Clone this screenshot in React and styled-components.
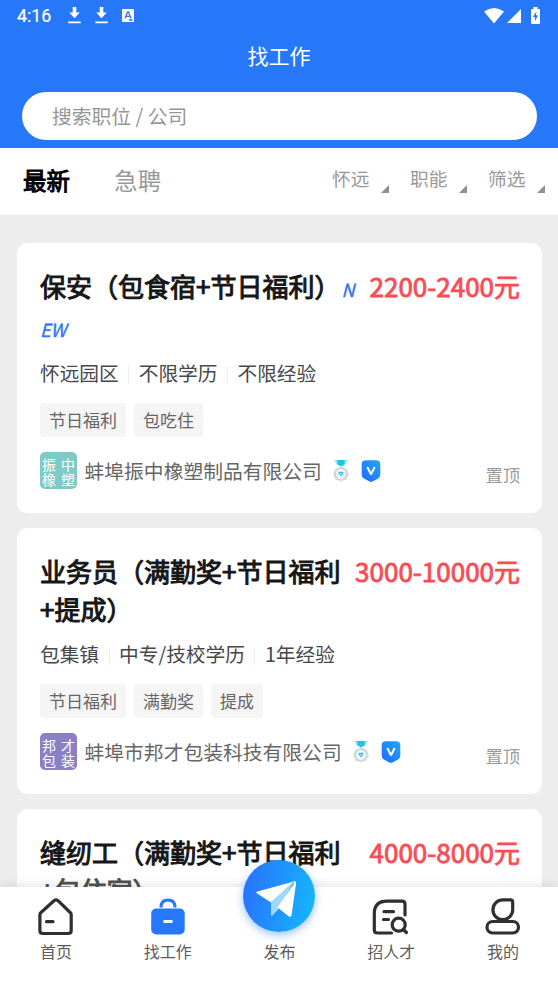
import React from "react";
import styled, { createGlobalStyle } from "styled-components";

const Global = createGlobalStyle`
  *, *::before, *::after { box-sizing: border-box; }
  html, body { margin: 0; padding: 0; }
  body {
    width: 558px;
    height: 993px;
    overflow: hidden;
    background: #ededed;
    font-family: "Noto Sans CJK SC", "Noto Sans", sans-serif;
  }
`;

const Screen = styled.div`
  width: 558px;
  height: 993px;
  display: flex;
  flex-direction: column;
  overflow: hidden;
  background: #ededed;
`;

const Header = styled.header`
  flex: none;
  height: 148px;
  background: #2678f8;
  color: #fff;
`;

const StatusBar = styled.div`
  height: 31px;
  padding: 0 18px 0 17px;
  display: flex;
  align-items: center;
  justify-content: space-between;
`;

const StatusGroup = styled.div`
  display: flex;
  align-items: center;
`;

const Clock = styled.span`
  width: 51px;
  font: 400 17.8px/31px Roboto, sans-serif;
  -webkit-text-stroke: 0.2px #fff;
`;

const StatusIcon = styled.svg`
  display: block;
  margin-right: ${(p) => p.$gap || 0}px;
`;

const PageTitle = styled.h1`
  margin: 0;
  height: 50px;
  font-size: 21px;
  font-weight: 400;
  line-height: 49px;
  text-align: center;
`;

const SearchBox = styled.div`
  width: 515px;
  height: 48px;
  margin: 11px 0 0 22px;
  padding-left: 30px;
  border-radius: 24px;
  background: #fff;
  color: #969696;
  font-size: 19.8px;
  line-height: 47px;
`;

const TabBar = styled.nav`
  flex: none;
  height: 67px;
  padding: 0 13px 0 23px;
  display: flex;
  justify-content: space-between;
  background: #fff;
`;

const Tabs = styled.div`
  display: flex;
  gap: 44.5px;
`;

const Tab = styled.span`
  font-size: 23.4px;
  line-height: 64px;
  color: ${(p) => (p.$active ? "#000" : "#999")};
  -webkit-text-stroke: ${(p) => (p.$active ? "1px #000" : "0")};
`;

const Filters = styled.div`
  display: flex;
  gap: 21px;
`;

const Filter = styled.span`
  display: flex;
  width: 57px;
  justify-content: space-between;
  font-size: 18.7px;
  line-height: 59px;
  color: #999;
`;

const Corner = styled.i`
  width: 8px;
  height: 8px;
  margin-top: 37px;
  background: #909090;
  clip-path: polygon(100% 0, 100% 100%, 0 100%);
`;

const List = styled.main`
  flex: 1;
  min-height: 0;
  overflow: hidden;
  padding: 28px 16px 0 17px;
  display: flex;
  flex-direction: column;
  gap: 15px;
`;

const Card = styled.article`
  flex: none;
  height: ${(p) => p.$height}px;
  padding: 23px 22px 0 23px;
  border-radius: 10px;
  background: #fff;
`;

const CardHead = styled.div`
  display: flex;
  justify-content: space-between;
  height: ${(p) => p.$height}px;
  line-height: 39px;
  font-size: 26px;
  white-space: nowrap;
`;

const JobTitle = styled.h2`
  margin: 0;
  font-size: 26px;
  font-weight: 400;
  color: #161616;
  -webkit-text-stroke: 1px #161616;
`;

const TitleLine = styled.div`
  height: ${(p) => p.$height || 38}px;
  line-height: ${(p) => p.$leading || 39}px;
  ${(p) => p.$faded && "color: #505050; -webkit-text-stroke-color: #505050;"}
`;

const NewMark = styled.em`
  font-size: 18px;
  font-style: italic;
  color: #2f74f5;
  -webkit-text-stroke: 0.4px #2f74f5;
  margin-left: ${(p) => p.$indent || 0}px;
`;

const Salary = styled.span`
  color: #f94c55;
  -webkit-text-stroke: 0.8px #f94c55;
`;

const Meta = styled.div`
  display: flex;
  align-items: center;
  height: 34px;
  margin: 7px 0 14px;
  font-size: 19.7px;
  color: #484848;
`;

const MetaItem = styled.span`
  white-space: nowrap;
  & + & {
    display: flex;
    align-items: center;
  }
  & + &::before {
    content: "";
    width: 1px;
    height: 18px;
    margin: 5px 9.5px 0 9.5px;
    background: #ededed;
  }
`;

const Tags = styled.div`
  display: flex;
  gap: 8px;
`;

const Tag = styled.span`
  height: 34px;
  padding: 0 9px;
  border-radius: 4px;
  background: #f5f5f5;
  color: #666;
  font-size: 17px;
  line-height: 34px;
`;

const Company = styled.div`
  display: flex;
  align-items: center;
  height: 37px;
  margin-top: 15px;
`;

const Logo = styled.span`
  width: 37px;
  height: 37px;
  padding: 5px 2px 0;
  display: grid;
  grid-template-columns: 14px 14px;
  grid-auto-rows: 15px;
  justify-content: space-between;
  border-radius: 5px;
  background: ${(p) => p.$color};
  color: #fff;
  font-size: 14px;
  line-height: 15px;
`;

const CompanyName = styled.span`
  margin: 0 9px 0 7.5px;
  font-size: 19.8px;
  line-height: 37px;
  color: #666;
`;

const Badges = styled.span`
  display: flex;
  align-items: center;
  gap: 10px;
`;

const Pinned = styled.span`
  margin: 8px 0 0 auto;
  font-size: 17.3px;
  line-height: 29px;
  color: #9b9b9b;
`;

const BottomNav = styled.footer`
  flex: none;
  z-index: 1;
  height: 106px;
  display: grid;
  grid-template-columns: repeat(5, 111.8px);
  background: #fff;
  box-shadow: 0 0 12px rgba(0, 0, 0, 0.14);
`;

const NavItem = styled.div`
  display: flex;
  flex-direction: column;
  align-items: center;
  padding-top: 10px;
  color: #5c5c5c;
  font-size: 16px;
  line-height: 24px;
  svg { display: block; flex: none; }
`;

const NavLabel = styled.span`
  margin-top: 2px;
`;

const PublishButton = styled.span`
  width: 72px;
  height: 72px;
  margin: -37px 1px 5px 0;
  border-radius: 50%;
  background: linear-gradient(100deg, #2876fc 10%, #16b2ff 90%);
  box-shadow: 0 3px 8px rgba(38, 120, 248, 0.45);
`;

const DownloadIcon = () => (
  <StatusIcon $gap={14} width="13" height="17" viewBox="0 0 13 17" fill="#fff">
    <path d="M4.700 0h3.600v5.500h3.500L6.500 11.200 1.200 5.500h3.500zM.3 14.500h12.400V16.200H.3z" />
  </StatusIcon>
);

const Medal = () => (
  <svg width="20" height="24" viewBox="0 0 20 24">
    <path d="M3 1h14l-3 4.500H6z" fill="#8cecf6" />
    <path d="M6.300 1h7.400v4.500L10 7.500 6.300 5.500z" fill="#20c5e6" />
    <path d="M10 7l3 1.800 3.200 1.500.6 2.800L18 15.500l-1.600 2.400-.9 2.800-2.800.6L10 22.400l-2.700-1.100-2.800-.6-.9-2.800L2 15.500l1.200-2.400.6-2.800L7 8.800z" fill="#d3dade" />
    <circle cx="10" cy="15" r="5.400" fill="#f1f7f8" stroke="#c0cacf" strokeWidth=".6" />
    <path d="M7.200 13.900l1.200-1.200h3.200l1.200 1.200-2.800 3.500z" fill="#2bbfe4" />
    <path d="M8.900 14l1.100 1.200 1.100-1.200" fill="none" stroke="#fff" strokeWidth=".7" />
  </svg>
);

const Shield = ({ id }) => (
  <svg width="20" height="22" viewBox="0 0 20 22">
    <defs>
      <linearGradient id={id} x1="0" y1="1" x2="1" y2="0">
        <stop offset="0" stopColor="#2468f8" />
        <stop offset="1" stopColor="#1ba8ff" />
      </linearGradient>
    </defs>
    <path d="M5 .3H15Q19.300.300 19.300 4.500v10q0 2.800-2.200 3.900L12 21.200q-2 1.100-4 0l-5.100-2.800Q.7 17.300.7 14.500v-10Q.7.300 5 .3z" fill={`url(#${id})`} />
    <path d="M6.300 7l3.700 7.200L13.700 7" fill="none" stroke="#fff" strokeWidth="2" strokeLinejoin="bevel" />
  </svg>
);

const HomeIcon = () => (
  <svg width="40" height="40" viewBox="0 0 40 40" fill="none" stroke="#2f2f2f" strokeWidth="3.200" strokeLinecap="round" strokeLinejoin="round">
    <path d="M3.900 17.800Q3.900 16.500 5 15.500L18 3.700q2-1.800 4 0L34.200 15.500q1 1 1 2.300V33.500q0 3-3 3H6.900q-3 0-3-3z" />
    <path d="M10.500 24.700h6.500" />
  </svg>
);

const BagIcon = () => (
  <svg width="40" height="40" viewBox="0 0 40 40">
    <path d="M13 10.500q0-7.500 7-7.500t7 7.500" fill="none" stroke="#2678f8" strokeWidth="3" />
    <rect x="3.200" y="11.500" width="33.500" height="26" rx="5" fill="#2678f8" />
    <path d="M15.500 24.500h9" stroke="#fff" strokeWidth="3" />
  </svg>
);

const ResumeSearchIcon = () => (
  <svg width="40" height="40" viewBox="0 0 40 40" fill="none" stroke="#2f2f2f" strokeWidth="3.200" strokeLinecap="round" strokeLinejoin="round">
    <path d="M20.500 36H6.300q-3 0-3-3V16.500Q3.300 4.200 16 4.200H31q3 0 3 3V18" />
    <path d="M13 14.700h9.500M12.500 22.500h5" />
    <circle cx="27.700" cy="27.700" r="6.500" />
    <path d="M32.400 32.500l3 3" />
  </svg>
);

const UserIcon = () => (
  <svg width="40" height="40" viewBox="0 0 40 40" fill="none" stroke="#2f2f2f" strokeWidth="3.200">
    <path d="M20 2.900h7.500q2.200 0 2.200 2.200V13a9.900 9.900 0 1 1-9.700-10.100z" />
    <rect x="4" y="24.500" width="31.500" height="11.500" rx="5.700" />
  </svg>
);

const PlaneIcon = () => (
  <svg width="72" height="72" viewBox="0 0 72 72">
    <path d="M51 21.500L14.500 31.500q-2.300 1 0 2.300L28 42.500z" fill="#fff" />
    <path d="M51 21.500L28 42.500V55q.5 1.500 2 0l5.500-6z" fill="#9ed8fb" />
    <path d="M51.500 23L34.500 47.500 46 56.500q2 1 2.500-1L53 24z" fill="#fff" />
    <path d="M50.500 21.200q2.500-.5 2.500 1.800l-1 5z" fill="#fff" />
  </svg>
);

const jobs = [
  {
    height: 270,
    headHeight: 82,
    title: "保安（包食宿+节日福利）",
    isNew: true,
    salary: "2200-2400元",
    meta: ["怀远园区", "不限学历", "不限经验"],
    tags: ["节日福利", "包吃住"],
    logo: ["振", "中", "橡", "塑"],
    color: "#7fc9c6",
    company: "蚌埠振中橡塑制品有限公司",
  },
  {
    height: 266,
    headHeight: 78,
    title: "业务员（满勤奖+节日福利",
    rest: "+提成）",
    salary: "3000-10000元",
    meta: ["包集镇", "中专/技校学历", "1年经验"],
    tags: ["节日福利", "满勤奖", "提成"],
    logo: ["邦", "才", "包", "装"],
    color: "#8a80c6",
    company: "蚌埠市邦才包装科技有限公司",
  },
  {
    height: 266,
    headHeight: 78,
    title: "缝纫工（满勤奖+节日福利",
    rest: "+包住宿）",
    faded: true,
    salary: "4000-8000元",
  },
];

const JobCard = ({ job, index }) => (
  <Card $height={job.height}>
    <CardHead $height={job.headHeight}>
      <JobTitle>
        <TitleLine $height={job.isNew ? 42 : 38}>
          {job.title}
          {job.isNew && <NewMark $indent={1}>N</NewMark>}
        </TitleLine>
        <TitleLine $faded={job.faded} $leading={job.isNew ? 35 : 39}>
          {job.isNew ? <NewMark>EW</NewMark> : job.rest}
        </TitleLine>
      </JobTitle>
      <Salary>{job.salary}</Salary>
    </CardHead>
    {job.meta && (
      <>
        <Meta>{job.meta.map((m) => <MetaItem key={m}>{m}</MetaItem>)}</Meta>
        <Tags>{job.tags.map((t) => <Tag key={t}>{t}</Tag>)}</Tags>
        <Company>
          <Logo $color={job.color}>{job.logo.map((c) => <span key={c}>{c}</span>)}</Logo>
          <CompanyName>{job.company}</CompanyName>
          <Badges>
            <Medal />
            <Shield id={`shield-${index}`} />
          </Badges>
          <Pinned>置顶</Pinned>
        </Company>
      </>
    )}
  </Card>
);

export default function App() {
  return (
    <Screen>
      <Global />
      <Header>
        <StatusBar>
          <StatusGroup>
            <Clock>4:16</Clock>
            <DownloadIcon />
            <DownloadIcon />
            <StatusIcon width="12" height="13" viewBox="0 0 12 13">
              <rect width="12" height="13" rx="1" fill="#fff" />
              <path d="M3 9.500L5.700 3h.8l2.500 6.500M4 7.300h4M7 11h3.500" fill="none" stroke="#2678f8" strokeWidth="1.300" />
            </StatusIcon>
          </StatusGroup>
          <StatusGroup>
            <StatusIcon $gap={3} width="20" height="16" viewBox="0 0 20 16" fill="#fff">
              <path d="M0 3.500Q10-3.500 20 3.500L10 15.500z" />
            </StatusIcon>
            <StatusIcon $gap={10} width="14" height="14" viewBox="0 0 14 14" fill="#fff">
              <path d="M14 0v14H0z" />
            </StatusIcon>
            <StatusIcon width="9" height="17" viewBox="0 0 9 17">
              <path d="M2.500 0h4v2H8q1 0 1 1v13q0 1-1 1H1q-1 0-1-1V3q0-1 1-1h1.500z" fill="#fff" />
              <path d="M5.300 4.500L2 10h2v4l3-5.500H5.200z" fill="#2678f8" />
            </StatusIcon>
          </StatusGroup>
        </StatusBar>
        <PageTitle>找工作</PageTitle>
        <SearchBox>搜索职位 / 公司</SearchBox>
      </Header>
      <TabBar>
        <Tabs>
          <Tab $active>最新</Tab>
          <Tab>急聘</Tab>
        </Tabs>
        <Filters>
          {["怀远", "职能", "筛选"].map((f) => (
            <Filter key={f}>{f}<Corner /></Filter>
          ))}
        </Filters>
      </TabBar>
      <List>
        {jobs.map((job, i) => <JobCard key={job.title} job={job} index={i} />)}
      </List>
      <BottomNav>
        <NavItem><HomeIcon /><NavLabel>首页</NavLabel></NavItem>
        <NavItem><BagIcon /><NavLabel>找工作</NavLabel></NavItem>
        <NavItem><PublishButton><PlaneIcon /></PublishButton><NavLabel>发布</NavLabel></NavItem>
        <NavItem><ResumeSearchIcon /><NavLabel>招人才</NavLabel></NavItem>
        <NavItem><UserIcon /><NavLabel>我的</NavLabel></NavItem>
      </BottomNav>
    </Screen>
  );
}
